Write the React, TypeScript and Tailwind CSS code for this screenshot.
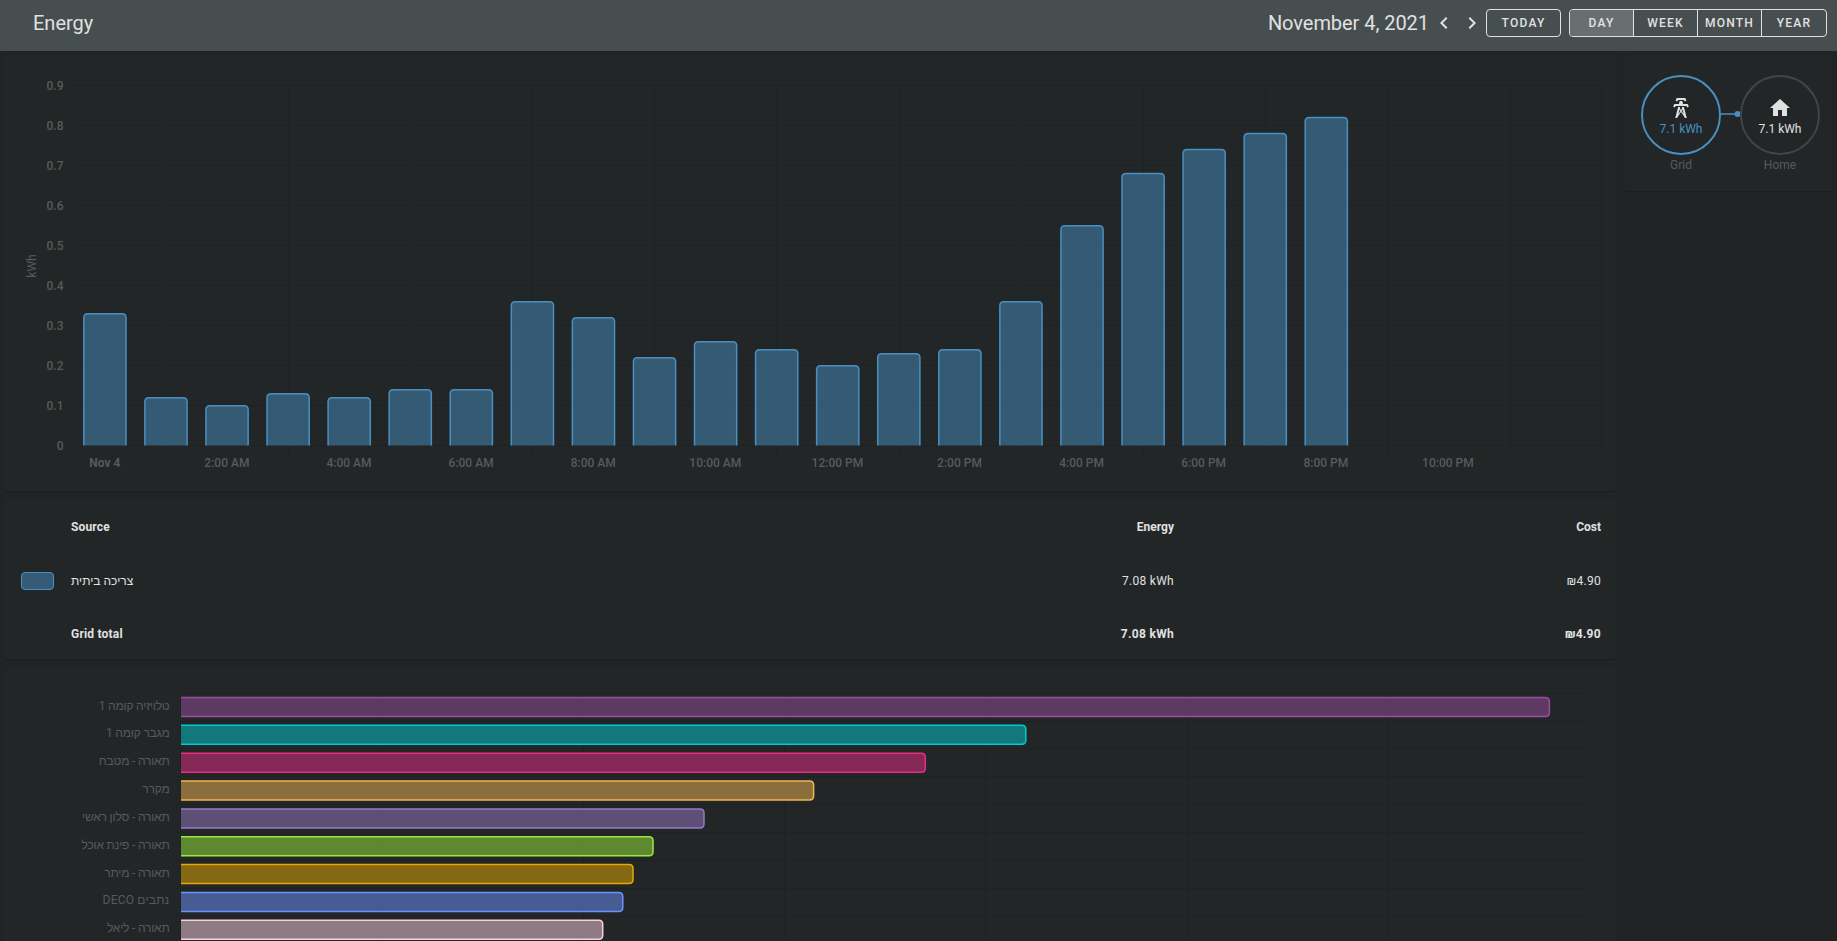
const grid = "#1e2223";
const hours = [0.33,0.12,0.1,0.13,0.12,0.14,0.14,0.36,0.32,0.22,0.26,0.24,0.2,0.23,0.24,0.36,0.55,0.68,0.74,0.78,0.82];
const xLabels = ["Nov 4","2:00 AM","4:00 AM","6:00 AM","8:00 AM","10:00 AM","12:00 PM","2:00 PM","4:00 PM","6:00 PM","8:00 PM","10:00 PM"];
const yLabels = ["0","0.1","0.2","0.3","0.4","0.5","0.6","0.7","0.8","0.9"];
const devices = [
  { name: "טלויזיה קומה 1", end: 1549.4, c: "#994da0" },
  { name: "מגבר קומה 1", end: 1025.8, c: "#00ccd0" },
  { name: "תאורה - מטבח", end: 925.3, c: "#e72d88" },
  { name: "מקרר", end: 813.6, c: "#f1b754" },
  { name: "תאורה - סלון ראשי", end: 704, c: "#9779c8" },
  { name: "תאורה - פינת אוכל", end: 653, c: "#99e93c" },
  { name: "תאורה - מיתר", end: 633, c: "#e5a902" },
  { name: "נתבים DECO", end: 622.8, c: "#6991ff", wide: true },
  { name: "תאורה - ליאל", end: 602.7, c: "#fbcfe2" },
];
const font = "font-['Roboto','Liberation_Sans',sans-serif]";

function EnergyChart() {
  const base = 445.5;
  const unit = 400.5;
  return (
    <svg viewBox="4 55 1613 436" className="block w-[1613px] h-[436px]">
      {yLabels.map((l, i) => {
        const y = Math.floor(base - i * 40.05) + 0.5;
        return (
          <g key={l}>
            <line x1={66} x2={1601} y1={y} y2={y} stroke={grid} />
            <text x={63.5} y={y + 4} textAnchor="end" fontSize={12} fontWeight={500} fill="#565b5c">{l}</text>
          </g>
        );
      })}
      <line x1={74.5} x2={74.5} y1={85} y2={454} stroke={grid} />
      <line x1={1601.5} x2={1601.5} y1={85} y2={454} stroke={grid} />
      {Array.from({ length: 12 }).map((_, i) => {
        const x = Math.round(165.3 + i * 122.2) + 0.5;
        return <line key={i} x1={x} x2={x} y1={85} y2={454} stroke={grid} />;
      })}
      <text transform="translate(36 266) rotate(-90)" textAnchor="middle" fontSize={12} fill="#565b5c">kWh</text>
      {hours.map((v, i) => {
        const x = 83.8 + i * 61.07;
        const w = 42.2;
        const t = base - v * unit + 0.4;
        const d = `M${x} ${base}V${t + 4}Q${x} ${t} ${x + 4} ${t}H${x + w - 4}Q${x + w} ${t} ${x + w} ${t + 4}V${base}`;
        return (
          <g key={i}>
            <path d={d + "Z"} fill="#488fc2" fillOpacity={0.5} />
            <path d={d} fill="none" stroke="#488fc2" strokeWidth={1.5} />
          </g>
        );
      })}
      {xLabels.map((l, i) => (
        <text key={l} x={104.8 + i * 122.1} y={466.8} textAnchor="middle" fontSize={12} fontWeight={i === 0 ? 700 : 500} fill="#565b5c">{l}</text>
      ))}
    </svg>
  );
}

function DeviceChart() {
  return (
    <svg viewBox="4 667 1613 300" className="block w-[1613px] h-[300px]">
      <line x1={180} x2={1590} y1={693.5} y2={693.5} stroke={grid} />
      {Array.from({ length: 9 }).map((_, i) => {
        const y = Math.round(720.5 + i * 27.9) + 0.5;
        return <line key={i} x1={172} x2={1590} y1={y} y2={y} stroke={grid} />;
      })}
      {[180.5, 381.5, 583.5, 784.5, 985.5, 1187.5, 1388.5, 1589.5].map((x) => (
        <line key={x} x1={x} x2={x} y1={693} y2={945} stroke={grid} />
      ))}
      {devices.map((d, i) => {
        const t = 697.5 + i * 27.85;
        const b = t + 19;
        const e = d.end;
        const p = `M181 ${t}H${e - 4}Q${e} ${t} ${e} ${t + 4}V${b - 4}Q${e} ${b} ${e - 4} ${b}H181`;
        return (
          <g key={d.name}>
            <path d={p + "Z"} fill={d.c} fillOpacity={0.5} />
            <path d={p} fill="none" stroke={d.c} strokeWidth={1.5} />
            <text x={169.5} y={t + 12} direction="rtl" textAnchor="start" fontSize={12} letterSpacing={d.wide ? 0.2 : -0.2} fill="#565b5c">{d.name}</text>
          </g>
        );
      })}
    </svg>
  );
}

function SourceTable() {
  const row = "grid grid-cols-[67px_1fr_120px_427px] items-center pr-4 pt-[2px] text-[12px] text-[#e1e1e1]";
  return (
    <section className="mt-[7px] h-[161px] rounded bg-[#222627] shadow-[0_1px_0_#1a1d1e]">
      <div className={`${row} h-[56px] font-bold border-b border-[#1f2324]`}>
        <span />
        <span className="tracking-[0.15px]">Source</span>
        <span className="text-right">Energy</span>
        <span className="text-right">Cost</span>
      </div>
      <div className={`${row} h-[53px] border-b border-[#1f2324]`}>
        <span className="ml-[17px] w-[33px] h-[18px] rounded-[4px] border border-[#488fc2] bg-[#365b77]" />
        <span>צריכה ביתית</span>
        <span className="text-right tracking-[0.3px]">7.08 kWh</span>
        <span className="text-right tracking-[0.3px]">₪4.90</span>
      </div>
      <div className={`${row} h-[52px] font-bold`}>
        <span />
        <span className="tracking-[0.2px]">Grid total</span>
        <span className="text-right tracking-[0.3px]">7.08 kWh</span>
        <span className="text-right tracking-[0.3px]">₪4.90</span>
      </div>
    </section>
  );
}

function Button({ label, active, last }: { label: string; active?: boolean; last?: boolean }) {
  return (
    <span className={`w-16 flex items-center justify-center text-[12px] font-medium tracking-[1.25px] text-[#e1e1e1] ${active ? "bg-[#696f70]" : ""} ${last ? "" : "border-r border-[#e1e1e1]"}`}>
      {label}
    </span>
  );
}

export default function App() {
  return (
    <div className={`${font} h-[941px] w-[1837px] overflow-hidden bg-[#202425]`}>
      <header className="h-[51px] bg-[#464e4f] flex items-start pt-[9px] pl-[33px] pr-[10px]">
        <h1 className="text-[20px] leading-7 font-normal text-[#e1e1e1] flex-1">Energy</h1>
        <span className="text-[20px] leading-7 text-[#e1e1e1] tracking-[-0.05px]">November 4, 2021</span>
        <svg viewBox="0 0 24 24" className="w-6 h-6 mt-[2px] ml-[3px] fill-[#e1e1e1]"><path d="M15.41 16.58 10.83 12l4.58-4.59L14 6l-6 6 6 6z" /></svg>
        <svg viewBox="0 0 24 24" className="w-6 h-6 mt-[2px] ml-1 fill-[#e1e1e1]"><path d="M8.59 16.58 13.17 12 8.59 7.41 10 6l6 6-6 6z" /></svg>
        <span className="ml-[2px] w-[75px] h-[28px] rounded border border-[#e1e1e1] flex items-center justify-center text-[12px] font-medium tracking-[1.25px] text-[#e1e1e1]">TODAY</span>
        <div className="ml-2 flex h-[28px] rounded border border-[#e1e1e1] overflow-hidden">
          <Button label="DAY" active />
          <Button label="WEEK" />
          <Button label="MONTH" />
          <Button label="YEAR" last />
        </div>
      </header>
      <main className="flex gap-2 pl-1 pt-1">
        <div className="w-[1613px]">
          <section className="h-[436px] rounded bg-[#222627] shadow-[0_1px_0_#1a1d1e]">
            <EnergyChart />
          </section>
          <SourceTable />
          <section className="mt-2 rounded bg-[#222627]">
            <DeviceChart />
          </section>
        </div>
        <aside className="w-[208px] h-[136px] rounded bg-[#222627] shadow-[0_1px_0_#1a1d1e] pt-5 pl-4">
          <div className="flex items-start text-[12px]">
            <div className="w-20 flex flex-col items-center">
              <div className="w-20 h-20 rounded-full border-2 border-[#488fc2] flex flex-col items-center pt-[19px] text-[#488fc2]">
                <svg viewBox="0 0 24 24" className="w-6 h-6 fill-[#e1e1e1]"><path d="M8.28,5.45L6.5,4.55L7.76,2H16.23L17.5,4.55L15.72,5.44L15,4H9L8.28,5.45M18.62,8H14.09L13.3,5H10.7L9.91,8H5.38L4.1,10.55L5.89,11.44L6.62,10H17.38L18.1,11.45L19.89,10.56L18.62,8M17.77,22H15.7L15.46,21.1L12,15.9L8.53,21.1L8.3,22H6.23L9.12,11H11.19L10.83,12.35L12,14.1L13.16,12.35L12.81,11H14.88L17.77,22M11.4,15L10.5,13.65L9.32,18.13L11.4,15M14.68,18.12L13.5,13.64L12.6,15L14.68,18.12Z" /></svg>
                <span>7.1 kWh</span>
              </div>
              <span className="mt-px text-[#565b5c]">Grid</span>
            </div>
            <svg viewBox="0 0 19 8" className="w-[19px] h-2 mt-[35px] shrink-0"><line x1={0} x2={17} y1={4} y2={4} stroke="#488fc2" strokeWidth={1.5} /><circle cx={16.5} cy={4} r={3} fill="#488fc2" /></svg>
            <div className="w-20 flex flex-col items-center">
              <div className="w-20 h-20 rounded-full border-2 border-[#414546] flex flex-col items-center pt-[19px] text-[#e1e1e1]">
                <svg viewBox="0 0 24 24" className="w-6 h-6 fill-[#e1e1e1]"><path d="M10,20V14H14V20H19V12H22L12,3L2,12H5V20H10Z" /></svg>
                <span>7.1 kWh</span>
              </div>
              <span className="mt-px text-[#565b5c]">Home</span>
            </div>
          </div>
        </aside>
      </main>
    </div>
  );
}
